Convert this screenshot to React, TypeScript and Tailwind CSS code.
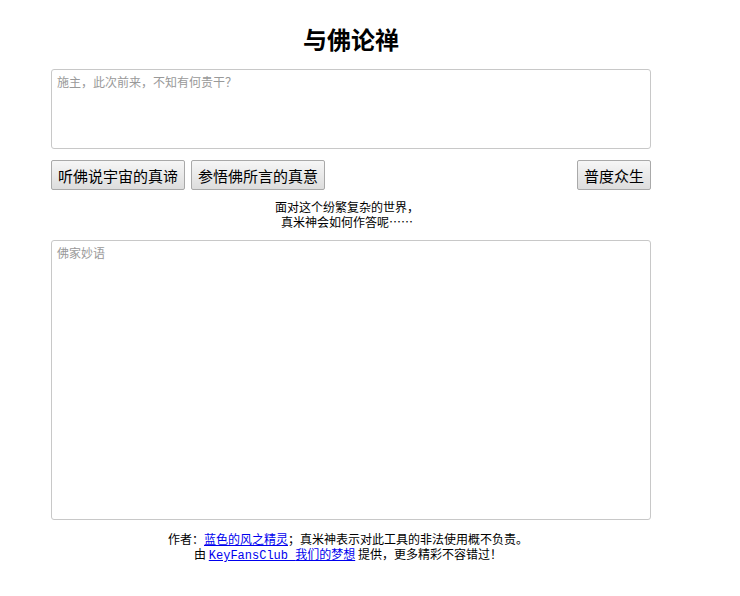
import React from 'react';

const font = { fontFamily: '"Noto Sans CJK SC", "Liberation Sans", sans-serif' };

const btn =
  'h-[30px] px-[6px] border border-[#a9a9a9] rounded-[2px] bg-gradient-to-b from-[#f6f6f6] to-[#dddddd] text-[15px] leading-none text-black';

export default function App() {
  return (
    <div className="min-h-[596px] bg-white text-black" style={font}>
      <div className="ml-[51px] w-[600px] pt-[24px]">
        <h1 className="text-center text-[24px] font-bold leading-[30px] mb-[15px]">与佛论禅</h1>
        <textarea
          placeholder="施主，此次前来，不知有何贵干？"
          className="block w-full h-[80px] border border-[#c8c8c8] rounded-[3px] px-[5px] py-[4px] text-[12px] leading-[16px] resize-none outline-none placeholder:text-[#999]"
        />
        <div className="flex items-center gap-[6px] mt-[11px]">
          <button className={btn}>听佛说宇宙的真谛</button>
          <button className={btn}>参悟佛所言的真意</button>
          <button className={btn + ' ml-auto'}>普度众生</button>
        </div>
        <div className="text-center text-[12px] leading-[15px] mt-[9px] mr-[8px]">
          <p>面对这个纷繁复杂的世界，</p>
          <p>真米神会如何作答呢……</p>
        </div>
        <textarea
          placeholder="佛家妙语"
          className="block w-full h-[280px] mt-[11px] border border-[#c8c8c8] rounded-[3px] px-[5px] py-[4px] text-[12px] leading-[16px] resize-none outline-none placeholder:text-[#999]"
        />
        <div className="text-center text-[12px] leading-[15px] mt-[11px] mr-[6px]">
          <p>
            作者：<a href="#" className="text-[#0000ee] underline">蓝色的风之精灵</a>；真米神表示对此工具的非法使用概不负责。
          </p>
          <p>
            由{' '}
            <a href="#" className="text-[#0000ee] underline">
              <span style={{ fontFamily: '"Liberation Mono", monospace' }}>KeyFansClub </span>我们的梦想
            </a>{' '}
            提供，更多精彩不容错过！
          </p>
        </div>
      </div>
    </div>
  );
}
